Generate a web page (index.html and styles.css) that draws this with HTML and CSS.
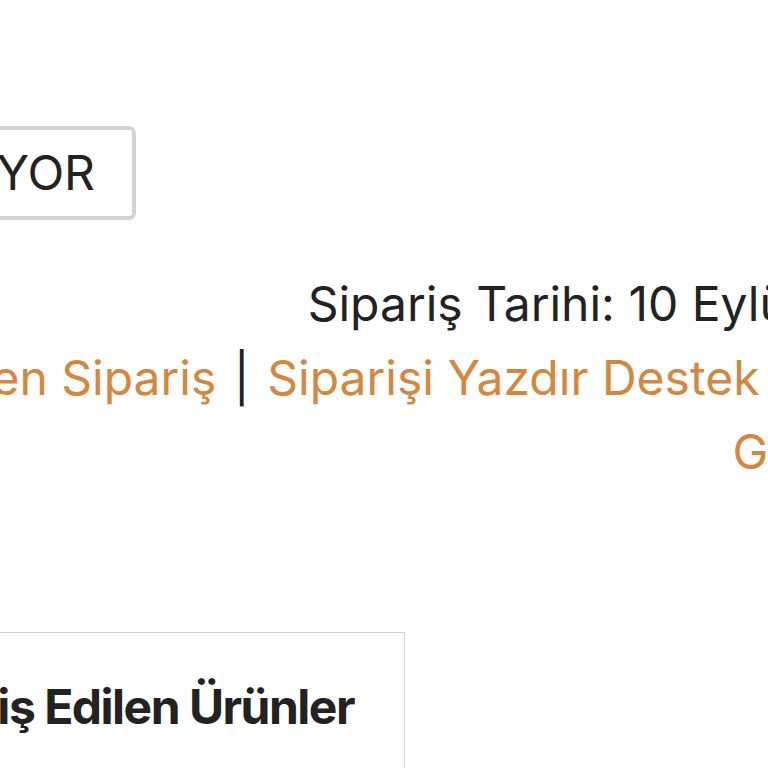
FILE: index.html
```html
<!DOCTYPE html>
<html lang="tr">
<head>
    <meta charset="UTF-8">
    <title>Sipariş Detayı</title>
    <link rel="stylesheet" href="styles.css">
</head>
<body>
    <div class="status-row">
        <span class="status">SİPARİŞİNİZ HAZIRLANIYOR</span>
    </div>
    <div class="order-meta">
        <p class="date">Sipariş Tarihi: 10 Eylül 2024</p>
        <p class="actions">
            <a href="#">Yeniden Sipariş</a> <span class="sep">|</span>
            <a href="#">Siparişi Yazdır</a>
            <a href="#">Destek Talebi</a><span class="sep">|</span>
            <a href="#">Geri Dön</a>
        </p>
    </div>
    <div class="products-row">
        <div class="products">
            <h2>Sipariş Edilen Ürünler</h2>
        </div>
    </div>
</body>
</html>
```

FILE: styles.css
```css
*{
    box-sizing: border-box;
}
html,body{
    margin: 0px;
    padding: 0px;
    background: #fff;
    overflow: hidden;
}
body{
    font-family: Inter, "Noto Sans", sans-serif;
    color: #222;
    font-size: 48px;
}
.status-row{
    width: 136px;
    display: flex;
    justify-content: flex-end;
    margin-top: 126px;
}
.status{
    flex: none;
    white-space: nowrap;
    border: 4px solid #d3d3d3;
    border-radius: 7px;
    padding: 15px 37px 15px 36px;
    line-height: 56px;
    color: #222;
}
.order-meta{
    margin: 47px -164px 0px -200px;
    text-align: right;
}
.order-meta p{
    margin: 0px;
    line-height: 74px;
}
.actions a{
    color: #d4873f;
    text-decoration: none;
}
.sep{
    color: #222;
    margin: 0px 4px;
}
.products-row{
    width: 405px;
    display: flex;
    justify-content: flex-end;
    margin-top: 143px;
}
.products{
    flex: none;
    border: 1px solid #d0d0d0;
    padding: 44px 50px 200px 60px;
}
.products h2{
    margin: 0px;
    font-size: 48px;
    line-height: 60px;
    font-weight: 700;
    letter-spacing: -1.5px;
    white-space: nowrap;
    color: #222;
}
```
